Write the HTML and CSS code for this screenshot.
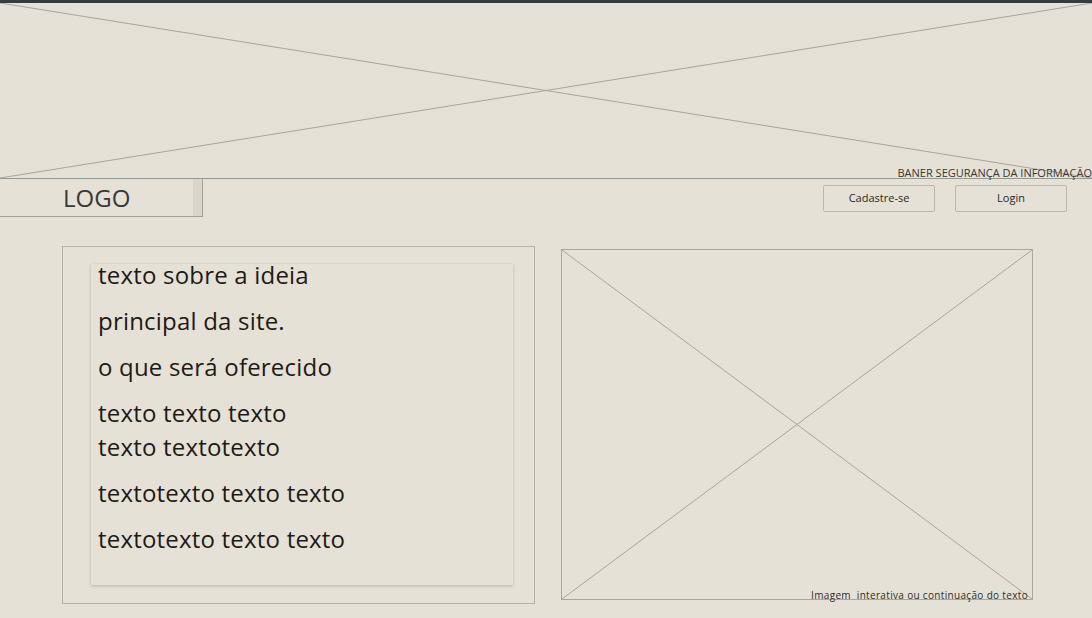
FILE: index.html
```html
<!DOCTYPE html>
<html lang="pt">
<head>
<meta charset="utf-8">
<title>Wireframe</title>
<link rel="stylesheet" href="styles.css">
</head>
<body>
<div class="topbar"></div>
<div class="banner">
  <svg class="cross" viewBox="0 0 100 100" preserveAspectRatio="none">
    <line x1="0" y1="0" x2="100" y2="100"/>
    <line x1="100" y1="0" x2="0" y2="100"/>
  </svg>
  <span class="banner-label">BANER SEGURANÇA DA INFORMAÇÃO</span>
</div>
<header class="header">
  <div class="logo"><span class="logo-text">LOGO</span></div>
  <nav class="actions">
    <button class="btn">Cadastre-se</button>
    <button class="btn">Login</button>
  </nav>
</header>
<main class="main">
  <section class="panel">
    <div class="textbox">
      <p>texto sobre a ideia</p>
      <p>principal da site.</p>
      <p>o que será oferecido</p>
      <p>texto texto texto<br>texto textotexto</p>
      <p>textotexto texto texto</p>
      <p>textotexto texto texto</p>
    </div>
  </section>
  <section class="image">
    <svg class="cross" viewBox="0 0 100 100" preserveAspectRatio="none">
      <line x1="0" y1="0" x2="100" y2="100"/>
      <line x1="100" y1="0" x2="0" y2="100"/>
    </svg>
    <span class="caption">Imagem&nbsp; interativa ou continuação do texto</span>
  </section>
</main>
</body>
</html>
```
FILE: styles.css
```css
* { box-sizing: border-box; }
body {
  margin: 0;
  background: #e6e1d6;
  font-family: "Open Sans", "DejaVu Sans", sans-serif;
  color: #1e1a16;
  overflow: hidden;
}
.topbar { height: 3px; background: #353c41; }
.banner {
  position: relative;
  height: 176px;
  border-bottom: 1px solid #8a9ba3;
}
.cross {
  display: block;
  width: 100%;
  height: 100%;
}
.cross line {
  stroke: #a8a59d;
  stroke-width: 1;
  vector-effect: non-scaling-stroke;
}
.banner-label {
  position: absolute;
  right: 0;
  bottom: -2px;
  font-size: 11px;
  line-height: 14px;
  color: #3a3733;
  white-space: nowrap;
}
.header {
  display: flex;
  justify-content: space-between;
  align-items: flex-start;
  height: 38px;
}
.logo {
  width: 203px;
  height: 38px;
  border-bottom: 1px solid #a19e95;
  border-right: 1px solid #a19e95;
  box-shadow: inset -9px 0 0 #dad5ca;
  display: flex;
  align-items: center;
  padding-left: 63px;
}
.logo-text {
  font-size: 24px;
  color: #3a3835;
  line-height: 1;
}
.actions {
  display: flex;
  gap: 20px;
  padding-top: 6px;
  padding-right: 25px;
}
.btn {
  width: 112px;
  height: 27px;
  border: 1px solid #bab6ad;
  border-radius: 2px;
  background: #e6e1d6;
  font-family: "Open Sans", "DejaVu Sans", sans-serif;
  font-size: 11px;
  line-height: 14px;
  color: #2a2723;
  padding: 0 0 2px;
}
.main {
  display: flex;
  align-items: flex-start;
  gap: 26px;
  padding: 29px 0 0 62px;
}
.panel {
  width: 473px;
  height: 358px;
  border: 1px solid #b4b1a8;
  padding: 17px 0 0 28px;
}
.textbox {
  width: 422px;
  height: 321px;
  background: #e6e1d6;
  box-shadow: 0 1px 3px rgba(0,0,0,0.2);
  padding: 0 0 0 7px;
}
.textbox p {
  margin: 0 0 12px;
  font-size: 24px;
  line-height: 34px;
  letter-spacing: 0.2px;
  position: relative;
  top: -6px;
}
.image {
  position: relative;
  width: 472px;
  height: 351px;
  margin-top: 3px;
  border: 1px solid #a9a69d;
}
.caption {
  position: absolute;
  right: 4px;
  bottom: -3px;
  font-size: 10px;
  line-height: 14px;
  letter-spacing: 0.33px;
  color: #2f2c28;
  white-space: nowrap;
}
```
